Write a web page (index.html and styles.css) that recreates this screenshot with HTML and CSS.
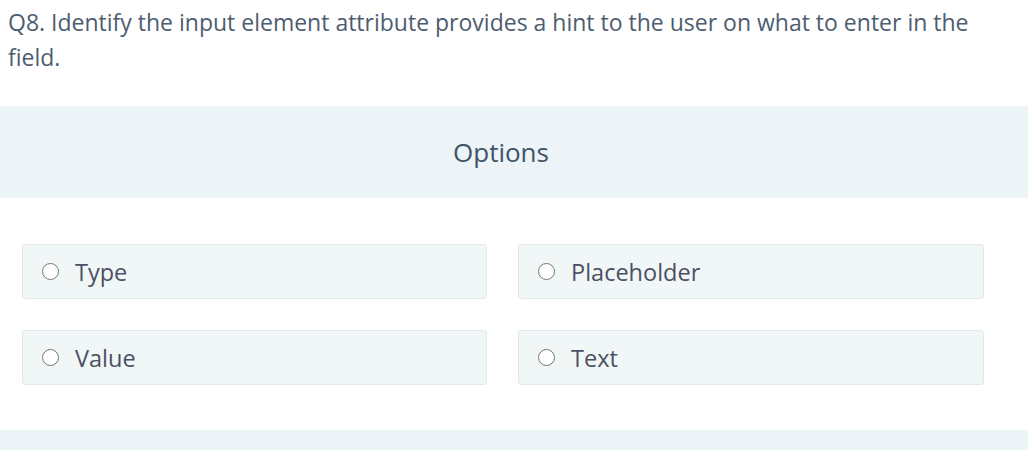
FILE: index.html
```html
<!DOCTYPE html>
<html>
<head>
<meta charset="utf-8">
<link rel="stylesheet" href="styles.css">
</head>
<body>
<div class="question">Q8. Identify the input element attribute provides a hint to the user on what to enter in the field.</div>
<div class="options-head">Options</div>
<div class="options">
  <label class="opt"><span class="radio"></span><span class="opt-text">Type</span></label>
  <label class="opt"><span class="radio"></span><span class="opt-text">Placeholder</span></label>
  <label class="opt"><span class="radio"></span><span class="opt-text">Value</span></label>
  <label class="opt"><span class="radio"></span><span class="opt-text">Text</span></label>
</div>
<div class="footer-band"></div>
</body>
</html>
```
FILE: styles.css
```css
html, body {
  margin: 0;
  padding: 0;
  background: #ffffff;
}
body {
  width: 1028px;
  font-family: "Open Sans", sans-serif;
  color: #4d5d70;
}
.question {
  padding: 5px 20px 0 8px;
  font-size: 23px;
  line-height: 35px;
  height: 100px;
  box-sizing: border-box;
}
.options-head {
  margin-top: 6px;
  height: 92px;
  background: #ecf4f7;
  display: flex;
  align-items: center;
  justify-content: center;
  font-size: 26px;
  color: #3f5468;
  padding-right: 26px;
  box-sizing: border-box;
}
.options {
  display: grid;
  grid-template-columns: 465px 466px;
  column-gap: 31px;
  row-gap: 31px;
  padding: 46px 0 45px 22px;
}
.opt {
  display: flex;
  align-items: center;
  height: 55px;
  box-sizing: border-box;
  background: #f1f6f7;
  border: 1px solid #e2e9ec;
  border-radius: 3px;
  padding-left: 19px;
}
.radio {
  width: 17px;
  height: 17px;
  border: 1.5px solid #767676;
  border-radius: 50%;
  background: #fff;
  box-sizing: border-box;
  flex: none;
}
.opt-text {
  margin-left: 16px;
  font-size: 23.5px;
  color: #4b5064;
}
.footer-band {
  height: 20px;
  background: #ecf4f7;
}
```
